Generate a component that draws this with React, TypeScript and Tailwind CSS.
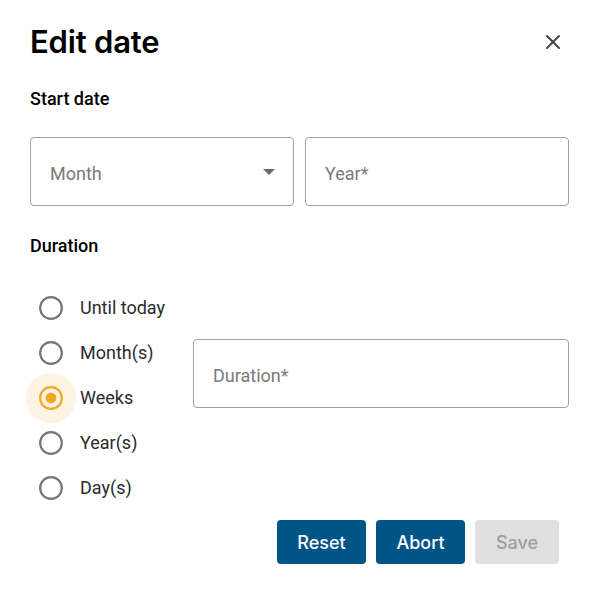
import { X } from "lucide-react";

const options = ["Until today", "Month(s)", "Weeks", "Year(s)", "Day(s)"];

function Radio({ label, checked }: { label: string; checked?: boolean }) {
  return (
    <label className="flex h-[45px] items-center">
      <span className="relative flex h-[50px] w-[50px] items-center justify-center -ml-[4px]">
        {checked && <span className="absolute inset-0 rounded-full bg-[#fdf3e3]" />}
        <svg viewBox="0 0 24 24" className="relative h-[26px] w-[26px]">
          <circle
            cx="12"
            cy="12"
            r="10"
            fill="none"
            stroke={checked ? "#f6a623" : "#757575"}
            strokeWidth="2"
          />
          {checked && <circle cx="12" cy="12" r="5" fill="#f6a623" />}
        </svg>
      </span>
      <span className="ml-[4px] text-[18px] text-[#2b2b2b]">{label}</span>
    </label>
  );
}

function Field({ placeholder, className = "" }: { placeholder: string; className?: string }) {
  return (
    <div
      className={`flex h-[69px] items-center rounded-[4px] border border-[#a0a0a0] px-[19px] pt-[3px] text-[18px] text-[#7a7a7a] ${className}`}
    >
      {placeholder}
    </div>
  );
}

export default function App() {
  return (
    <div className="h-[589px] w-[596px] bg-white pl-[30px] pr-[27px] pt-[22px] font-['Roboto',sans-serif] text-[#1f1f1f]">
      <div className="flex items-center justify-between">
        <h2 className="font-['Inter',sans-serif] text-[31px] font-semibold leading-[40px] tracking-[-0.2px] text-black">
          Edit date
        </h2>
        <button className="mr-[4px] text-[#444]">
          <X className="h-6 w-6" strokeWidth={2} />
        </button>
      </div>

      <p className="mt-[25px] text-[18px] font-medium leading-[24px] text-black">Start date</p>

      <div className="mt-[26px] grid grid-cols-2 gap-[11px]">
        <div className="relative">
          <Field placeholder="Month" />
          <svg viewBox="0 0 12 6" className="absolute right-[19px] top-[32px] h-[6px] w-[12px]">
            <path d="M0 0h12L6 6z" fill="#6b6b6b" />
          </svg>
        </div>
        <Field placeholder="Year*" />
      </div>

      <p className="mt-[28px] text-[18px] font-medium leading-[24px] text-black">Duration</p>

      <div className="mt-[27px] flex">
        <div className="flex w-[163px] flex-col">
          {options.map((o) => (
            <Radio key={o} label={o} checked={o === "Weeks"} />
          ))}
        </div>
        <Field placeholder="Duration*" className="mt-[54px] flex-1" />
      </div>

      <div className="mt-[10px] flex justify-end gap-[10px] pr-[10px] font-['Inter',sans-serif] text-[18px] font-medium">
        <button className="h-[44px] w-[89px] rounded-[4px] bg-[#005587] text-white">Reset</button>
        <button className="h-[44px] w-[89px] rounded-[4px] bg-[#005587] text-white">Abort</button>
        <button className="h-[44px] w-[84px] rounded-[4px] bg-[#e0e0e0] text-[#9e9e9e]">Save</button>
      </div>
    </div>
  );
}
